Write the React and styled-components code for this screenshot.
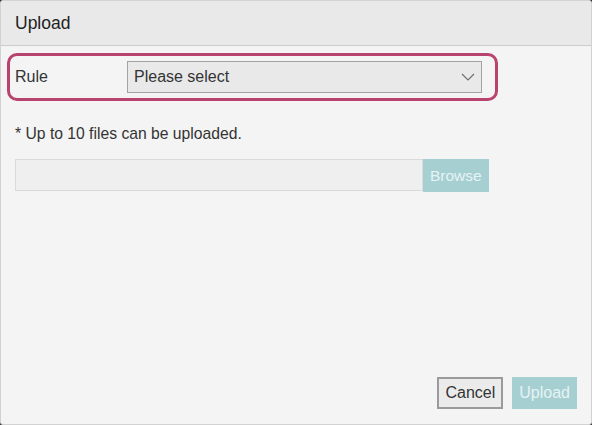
import React from 'react';
import styled, { createGlobalStyle } from 'styled-components';

const GlobalStyle = createGlobalStyle`
  html, body {
    margin: 0;
    padding: 0;
    background: #3a3a3a;
  }
  body {
    font-family: "Liberation Sans", Arial, sans-serif;
    color: #333;
  }
`;

const Dialog = styled.div`
  box-sizing: border-box;
  width: 592px;
  height: 425px;
  display: flex;
  flex-direction: column;
  background: #f4f4f4;
  border: 1px solid #d2d2d2;
  border-radius: 3px;
  overflow: hidden;
`;

const Header = styled.div`
  height: 44px;
  display: flex;
  align-items: center;
  padding: 0 14px;
  background: #e9e9e9;
  border-bottom: 1px solid #cdcdcd;
  font-size: 17.5px;
  color: #222;
`;

const Body = styled.div`
  flex: 1;
  display: flex;
  flex-direction: column;
  padding: 7px 0 0 6px;
`;

const Highlight = styled.div`
  box-sizing: border-box;
  width: 491px;
  height: 48px;
  display: flex;
  align-items: center;
  border: 3px solid #b8436f;
  border-radius: 10px;
  padding: 0 13px 0 5px;
`;

const Label = styled.span`
  width: 112px;
  font-size: 16px;
`;

const Select = styled.div`
  box-sizing: border-box;
  flex: 1;
  height: 32px;
  display: flex;
  align-items: center;
  justify-content: space-between;
  padding: 0 6px 0 6px;
  background: #e9e9e9;
  border: 1px solid #a3a3a3;
  font-size: 16px;
  color: #333;
`;

const Note = styled.p`
  margin: 24px 0 0 8px;
  font-size: 15.7px;
  line-height: 18px;
`;

const FileRow = styled.div`
  display: flex;
  margin: 16px 0 0 8px;
`;

const FileField = styled.div`
  box-sizing: border-box;
  width: 408px;
  height: 32px;
  background: #efefef;
  border: 1px solid #dadada;
`;

const Button = styled.button`
  box-sizing: border-box;
  height: ${(p) => p.$h || 32}px;
  padding: 0 ${(p) => p.$px || 7}px;
  font-family: inherit;
  font-size: ${(p) => p.$size || 16}px;
  cursor: pointer;
  color: ${(p) => (p.$primary ? '#e6f3f4' : '#333')};
  background: ${(p) => (p.$primary ? '#a6cfd2' : '#ebebeb')};
  border: ${(p) => (p.$primary ? 'none' : '2px solid #9a9a9a')};
`;

const Footer = styled.div`
  display: flex;
  justify-content: flex-end;
  gap: 9px;
  padding: 0 14px 15px 0;
`;

const Chevron = () => (
  <svg width="14" height="8" viewBox="0 0 14 8" fill="none">
    <path d="M1 1l6 6 6-6" stroke="#6f6f6f" strokeWidth="1.2" />
  </svg>
);

export default function App() {
  return (
    <>
      <GlobalStyle />
      <Dialog>
        <Header>Upload</Header>
        <Body>
          <Highlight>
            <Label>Rule</Label>
            <Select>
              Please select
              <Chevron />
            </Select>
          </Highlight>
          <Note>* Up to 10 files can be uploaded.</Note>
          <FileRow>
            <FileField />
            <Button $primary $size={15.5} $h={33} $px={7}>
              Browse
            </Button>
          </FileRow>
        </Body>
        <Footer>
          <Button $px={6}>Cancel</Button>
          <Button $primary $px={7}>
            Upload
          </Button>
        </Footer>
      </Dialog>
    </>
  );
}
